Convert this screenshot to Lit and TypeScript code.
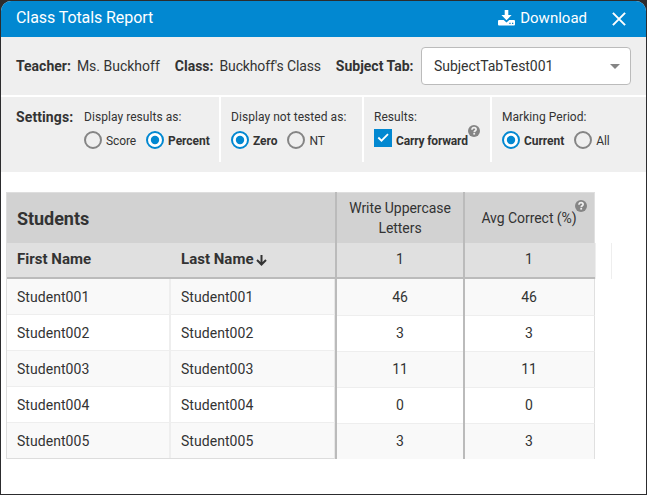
import { LitElement, html, css, svg } from "lit";
import { customElement, property } from "lit/decorators.js";
import { classMap } from "lit/directives/class-map.js";

@customElement("help-icon")
class HelpIcon extends LitElement {
  static styles = css`
    :host { display: block; width: 12px; height: 12px; }
    svg { display: block; }
  `;
  render() {
    return html`<svg width="12" height="12" viewBox="0 0 12 12">
      <circle cx="6" cy="6" r="6" fill="#858585" />
      <path d="M4 4.7C4 3.3 4.8 2.700 6.100 2.700S8.100 3.400 8.100 4.500C8.100 5.700 6.200 5.700 6.200 7.200" fill="none" stroke="#f0f0f0" stroke-width="1.700" />
      <rect x="5.300" y="8" width="1.800" height="1.600" fill="#f0f0f0" />
    </svg>`;
  }
}

@customElement("radio-option")
class RadioOption extends LitElement {
  @property() label = "";
  @property({ type: Boolean }) checked = false;
  static styles = css`
    :host { display: flex; align-items: center; height: 18px; }
    svg { display: block; margin-right: 4px; flex: none; }
    .label { font-size: 12px; line-height: 18px; white-space: nowrap; position: relative; top: 1px; letter-spacing: -0.1px; }
    .on { font-weight: 700; letter-spacing: -0.05px; }
  `;
  render() {
    const color = this.checked ? "#0288d1" : "#858585";
    return html`<svg width="18" height="18" viewBox="0 0 18 18">
        <circle cx="9" cy="9" r="8" fill=${this.checked ? "#fff" : "none"} stroke=${color} stroke-width="2" />
        ${this.checked ? svg`<circle cx="9" cy="9" r="4.2" fill=${color} />` : ""}
      </svg>
      <span class=${classMap({ label: true, on: this.checked })}>${this.label}</span>`;
  }
}

const students = [
  { first: "Student001", last: "Student001", score: 46 },
  { first: "Student002", last: "Student002", score: 3 },
  { first: "Student003", last: "Student003", score: 11 },
  { first: "Student004", last: "Student004", score: 0 },
  { first: "Student005", last: "Student005", score: 3 },
];

@customElement("app-root")
class AppRoot extends LitElement {
  static styles = css`
    :host {
      display: block; box-sizing: border-box; width: 647px; height: 495px; padding: 1px;
      background: #2c2c2e; color: #333; font-family: Roboto, sans-serif; overflow: hidden;
      font-size: 14px;
    }
    * { box-sizing: border-box; }
    .modal { height: 493px; background: #fff; border-radius: 10px 10px 0 0; overflow: hidden; }
    .bar { display: flex; align-items: center; height: 36px; background: #0288d1; color: #fff; padding: 0 20px 0 15px; }
    .title { font-size: 16px; line-height: 20px; margin-right: auto; padding-bottom: 2px; letter-spacing: -0.08px; }
    .download { display: flex; align-items: center; font-size: 15px; line-height: 20px; padding-bottom: 2px; }
    .download svg { margin-right: 5px; }
    .close { margin-left: 25px; }
    svg { display: block; flex: none; }
    .filters { display: flex; align-items: center; height: 58px; padding: 0 15px; background: #efefef; white-space: nowrap; }
    .filters b { margin-right: 6px; }
    .filters b:last-of-type { margin-right: 0; }
    .filters .value { margin-right: 15px; }
    .filters .class-name { letter-spacing: -0.14px; }
    .select {
      display: flex; align-items: center; justify-content: space-between; width: 210px; height: 38px;
      margin-left: auto; padding: 0 10px 0 12px; border: 1px solid #bbb; border-radius: 4px; background: #fff;
      letter-spacing: -0.05px;
    }
    .settings { display: flex; height: 75px; margin-top: 2px; background: #efefef; white-space: nowrap; }
    .heading { width: 83px; padding: 10px 0 0 15px; line-height: 20px; font-weight: 700; letter-spacing: 0.1px; }
    .group { height: 65px; padding: 11px 0 0 10px; border-left: 2px solid #fff; }
    .group.results { width: 135px; border: 0; padding-left: 0; }
    .group.tested { width: 143px; }
    .group.carry { width: 128px; }
    .group.period { width: 156px; }
    .caption { font-size: 12px; line-height: 18px; height: 23px; letter-spacing: 0.05px; }
    .options { display: flex; gap: 10px; }
    .check { display: flex; align-items: flex-start; margin-top: -2px; font-size: 12px; font-weight: 700; line-height: 18px; }
    .check svg { margin-right: 4px; }
    .check span { margin-top: 3px; letter-spacing: -0.17px; }
    .check help-icon { margin-top: -4px; }
    .panes { display: flex; margin: 20px 0 0 5px; height: 267px; }
    .left { width: 329px; border-left: 1px solid #ddd; }
    .h1 { height: 51px; background: #d2d2d2; border-top: 1px solid #dedede; }
    .h2 { height: 36px; background: #e0e0e0; border-bottom: 2px solid #bbb; line-height: 32px; }
    .students { padding-left: 10px; font-size: 18px; line-height: 52px; font-weight: 700; letter-spacing: -0.05px; }
    .names { display: grid; grid-template-columns: 164px 1fr; padding-left: 10px; font-weight: 700; font-size: 15px; letter-spacing: 0.02px; }
    .names .last { display: flex; align-items: flex-start; gap: 2px; }
    .names svg { margin-top: 12px; }
    .row { display: grid; grid-template-columns: 164px 1fr; height: 36px; border-right: 1px solid #e8e8e8; border-bottom: 1px solid #eee; line-height: 37px; letter-spacing: 0.05px; }
    .row:nth-child(odd) { background: #f9f9f9; }
    .row:last-child { border-bottom-color: #ddd; }
    .cell { padding-left: 10px; height: 35px; }
    .cell:first-child { border-right: 2px solid #eee; }
    .metric { border-left: 2px solid #bbb; width: 128px; text-align: center; }
    .metric .h1 { display: flex; align-items: center; justify-content: center; line-height: 20px; position: relative; }
    .metric .h1 span { letter-spacing: -0.05px; }
    .metric .num { height: 36px; line-height: 35px; border-bottom: 1px solid #eee; }
    .metric .num:nth-child(odd) { background: #f9f9f9; }
    .metric .num:first-child { height: 37px; line-height: 37px; }
    .metric .num:last-child { height: 35px; border-bottom: 0; }
    .metric.avg { width: 132px; }
    .avg .h1, .avg .num { border-right: 1px solid #e0e0e0; padding-right: 1px; }
    .avg .h2 { padding-right: 2px; }
    .avg help-icon { position: absolute; right: 7px; top: 7px; }
    .gutter { width: 17px; height: 36px; margin-top: 51px; border-left: 1px solid #eee; border-right: 1px solid #eee; }
  `;

  metric(label: unknown, cls: string, help = false) {
    return html`<div class="metric ${cls}">
      <div class="h1"><span>${label}</span>${help ? html`<help-icon></help-icon>` : ""}</div>
      <div class="h2">1</div>
      <div>${students.map((s) => html`<div class="num">${s.score}</div>`)}</div>
    </div>`;
  }

  render() {
    return html`<div class="modal">
      <div class="bar">
        <div class="title">Class Totals Report</div>
        <div class="download">
          <svg width="17" height="16" viewBox="0 0 17 16" fill="#fff">
            <path d="M6.7 0h3.6v5h3.3L8.5 10.3 3.4 5h3.3z" />
            <path fill-rule="evenodd" d="M1 10h4.7l2.8 2.4 2.8-2.4H16q1 0 1 1v3.5q0 1-1 1H1q-1 0-1-1V11q0-1 1-1zM11.3 12.8h1.3v1.3h-1.3zM14 12.8h1.3v1.3H14z" />
          </svg>
          <span>Download</span>
        </div>
        <svg class="close" width="14" height="14" viewBox="0 0 14 14">
          <path d="M.9.9l12.200 12.200M13.100.9L.9 13.100" stroke="#fff" stroke-width="2" />
        </svg>
      </div>
      <div class="filters">
        <b>Teacher:</b><span class="value">Ms. Buckhoff</span>
        <b>Class:</b><span class="value class-name">Buckhoff's Class</span>
        <b>Subject Tab:</b>
        <div class="select"><span>SubjectTabTest001</span>
          <svg width="10" height="5" viewBox="0 0 10 5"><path d="M0 0h10L5 5z" fill="#858585" /></svg>
        </div>
      </div>
      <div class="settings">
        <div class="heading">Settings:</div>
        <div class="group results">
          <div class="caption">Display results as:</div>
          <div class="options"><radio-option label="Score"></radio-option><radio-option label="Percent" checked></radio-option></div>
        </div>
        <div class="group tested">
          <div class="caption">Display not tested as:</div>
          <div class="options"><radio-option label="Zero" checked></radio-option><radio-option label="NT"></radio-option></div>
        </div>
        <div class="group carry">
          <div class="caption">Results:</div>
          <div class="check">
            <svg width="18" height="18" viewBox="0 0 18 18"><rect width="18" height="18" fill="#0288d1" /><path d="M4.300 8.500l3.200 3.200L14 5.200" fill="none" stroke="#fff" stroke-width="1.800" /></svg>
            <span>Carry forward</span><help-icon></help-icon>
          </div>
        </div>
        <div class="group period">
          <div class="caption">Marking Period:</div>
          <div class="options"><radio-option label="Current" checked></radio-option><radio-option label="All"></radio-option></div>
        </div>
      </div>
      <div class="panes">
        <div class="left">
          <div class="h1 students">Students</div>
          <div class="h2 names">
            <span>First Name</span>
            <span class="last">Last Name<svg width="11" height="11" viewBox="0 0 11 11"><path d="M5.500 0v9.500M1 5l4.500 4.500L10 5" fill="none" stroke="#333" stroke-width="2" /></svg></span>
          </div>
          <div>${students.map((s) => html`<div class="row"><span class="cell">${s.first}</span><span class="cell">${s.last}</span></div>`)}</div>
        </div>
        ${this.metric(html`Write Uppercase<br />Letters`, "")}
        ${this.metric("Avg Correct (%)", "avg", true)}
        <div class="gutter"></div>
      </div>
    </div>`;
  }
}
